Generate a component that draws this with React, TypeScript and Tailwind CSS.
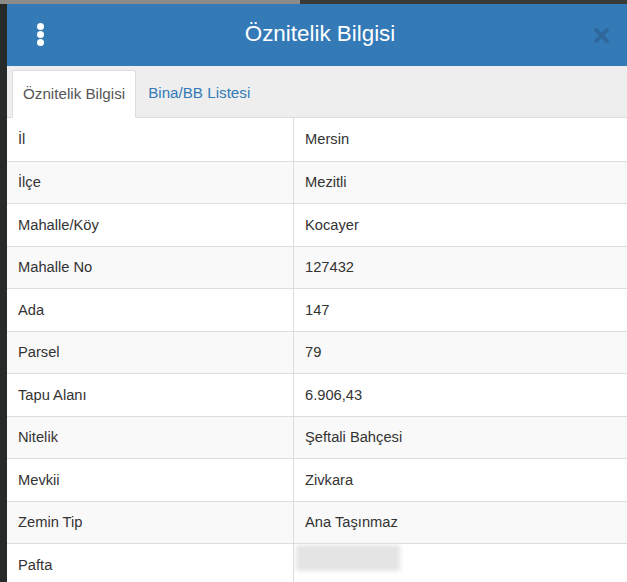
const rows: [string, string][] = [
  ["İl", "Mersin"],
  ["İlçe", "Mezitli"],
  ["Mahalle/Köy", "Kocayer"],
  ["Mahalle No", "127432"],
  ["Ada", "147"],
  ["Parsel", "79"],
  ["Tapu Alanı", "6.906,43"],
  ["Nitelik", "Şeftali Bahçesi"],
  ["Mevkii", "Zivkara"],
  ["Zemin Tip", "Ana Taşınmaz"],
  ["Pafta", ""],
];

const App = () => {
  return (
    <div
      className="w-[627px] h-[582px] overflow-hidden bg-[#2a2d2c] flex flex-col"
      style={{ fontFamily: '"Liberation Sans", Arial, sans-serif' }}
    >
      {/* map edge peeking above the popup */}
      <div className="h-[4px] flex shrink-0">
        <div className="w-[300px] bg-[#8d8b88]" />
        <div className="flex-1 bg-[#3a3a38]" />
      </div>

      <div className="flex flex-1 min-h-0">
        <div className="w-[7px] shrink-0 bg-[#262a29]" />

        <div className="flex-1 flex flex-col bg-white min-w-0">
          {/* header */}
          <div className="h-[62px] shrink-0 bg-[#337ab7] flex items-center px-[22px]">
            <div className="w-[14px] flex flex-col items-center gap-[1px] ml-[4px] -mt-[1px]">
              <span className="w-[7px] h-[7px] rounded-full bg-white" />
              <span className="w-[7px] h-[7px] rounded-full bg-white" />
              <span className="w-[7px] h-[7px] rounded-full bg-white" />
            </div>
            <div className="flex-1 text-center text-white text-[22.4px] leading-none -mt-[2px]">
              Öznitelik Bilgisi
            </div>
            <svg width="17" height="17" viewBox="0 0 16 16" className="mr-[-5px]">
              <path
                d="M3 3 L13 13 M13 3 L3 13"
                stroke="#2f679c"
                strokeWidth="3.8"
                strokeLinecap="round"
              />
            </svg>
          </div>

          {/* tabs */}
          <div className="h-[52px] shrink-0 bg-[#eeeeee] border-b border-[#dddddd] flex items-end pl-[5px] text-[15.2px]">
            <div className="h-[48px] -mb-px px-[10px] flex items-center bg-white border border-[#dddddd] border-b-white rounded-t-[3px] text-[#555555]">
              Öznitelik Bilgisi
            </div>
            <div className="h-[48px] px-[12px] flex items-center text-[#337ab7]">
              Bina/BB Listesi
            </div>
          </div>

          {/* attribute table */}
          <div className="flex flex-col text-[14.7px] text-[#333333]">
            {rows.map(([label, value], i) => (
              <div
                key={label}
                className={`h-[42.5px] shrink-0 flex border-t border-[#dddddd] first:border-t-0 ${
                  i % 2 === 1 ? "bg-[#f9f9f9]" : "bg-white"
                }`}
              >
                <div className="w-[287px] shrink-0 flex items-center pl-[11px] border-r border-[#dddddd]">
                  {label}
                </div>
                <div className="flex-1 flex items-center pl-[11px]">
                  {label === "Pafta" ? (
                    <div className="w-[104px] h-[26px] -mt-[14px] -ml-[9px] bg-[#e4e4e4] blur-[2px]" />
                  ) : (
                    value
                  )}
                </div>
              </div>
            ))}
          </div>
        </div>
      </div>
    </div>
  );
};

export default App;
